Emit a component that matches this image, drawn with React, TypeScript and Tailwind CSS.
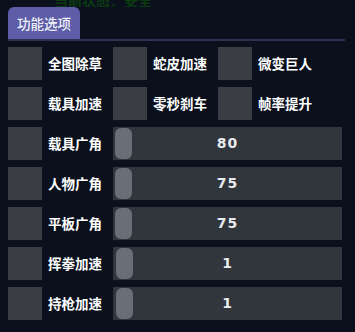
import React from "react";

const TOGGLES: string[][] = [
  ["全图除草", "蛇皮加速", "微变巨人"],
  ["载具加速", "零秒刹车", "帧率提升"],
];

const SLIDERS: { label: string; value: number; knob: string }[] = [
  { label: "载具广角", value: 80, knob: "ml-[2px]" },
  { label: "人物广角", value: 75, knob: "ml-[2px]" },
  { label: "平板广角", value: 75, knob: "ml-[2px]" },
  { label: "挥拳加速", value: 1, knob: "ml-[3px]" },
  { label: "持枪加速", value: 1, knob: "ml-[3px]" },
];

function Box() {
  return <div className="h-[33px] w-[34px] shrink-0 bg-[#3a3e44]" />;
}

export default function App() {
  return (
    <div
      className="h-[332px] w-[355px] overflow-hidden bg-[#0a111d] text-white"
      style={{ fontFamily: '"Noto Sans CJK SC", "Noto Sans", sans-serif' }}
    >
      <div className="h-[7px] overflow-hidden pl-[54px]">
        <div className="-mt-[10px] text-[14px] font-bold text-[#0c3a12]">当前状态：安全</div>
      </div>

      <div className="flex pl-[8px]">
        <div className="flex h-[32px] w-[72px] items-center justify-center rounded-t-[6px] bg-[#5d5da8] text-[13.5px] font-medium text-[#eef0f8]">
          功能选项
        </div>
      </div>
      <div className="ml-[8px] mr-[10px] h-[2px] bg-[#2b3350]" />

      <div className="flex flex-col gap-[7px] pt-[6px] pl-[8px]">
        {TOGGLES.map((row, i) => (
          <div key={i} className="flex">
            {row.map((t) => (
              <div key={t} className="flex w-[105px] items-center">
                <Box />
                <span className="ml-[6px] text-[13.5px] font-bold">{t}</span>
              </div>
            ))}
          </div>
        ))}

        {SLIDERS.map((s) => (
          <div key={s.label} className="flex items-center">
            <div className="flex w-[105px] items-center">
              <Box />
              <span className="ml-[6px] text-[13.5px] font-bold">{s.label}</span>
            </div>
            <div className="relative flex h-[33px] w-[229px] items-center bg-[#31353c]">
              <div className={`h-[31px] w-[17px] rounded-[6px] bg-[#6a6e76] ${s.knob}`} />
              <span
                className="absolute inset-0 flex items-center justify-center text-[14px] font-semibold tracking-[1px] text-[#e8eaee]"
                style={{ fontFamily: '"DejaVu Sans", sans-serif' }}
              >
                {s.value}
              </span>
            </div>
          </div>
        ))}
      </div>
    </div>
  );
}
